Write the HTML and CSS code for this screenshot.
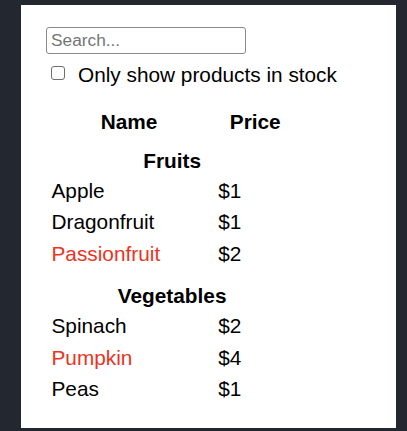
FILE: index.html
```html
<!DOCTYPE html>
<html>
<head>
<meta charset="utf-8">
<link rel="stylesheet" href="styles.css">
</head>
<body>
<div class="panel">
  <form class="search">
    <input class="search-input" type="text" placeholder="Search...">
    <label class="stock">
      <span class="box"></span>
      <span class="stock-text">Only show products in stock</span>
    </label>
  </form>
  <table class="products">
    <thead>
      <tr><th class="head">Name</th><th class="head">Price</th></tr>
    </thead>
    <tbody>
      <tr><th class="cat" colspan="2">Fruits</th></tr>
      <tr><td>Apple</td><td>$1</td></tr>
      <tr><td>Dragonfruit</td><td>$1</td></tr>
      <tr><td class="out">Passionfruit</td><td>$2</td></tr>
      <tr><th class="cat" colspan="2">Vegetables</th></tr>
      <tr><td>Spinach</td><td>$2</td></tr>
      <tr><td class="out">Pumpkin</td><td>$4</td></tr>
      <tr><td>Peas</td><td>$1</td></tr>
    </tbody>
  </table>
</div>
</body>
</html>
```

FILE: styles.css
```css
html, body {
  margin: 0;
  background: #23272f;
}
body {
  padding: 5px 0 0 21px;
  font-family: "Liberation Sans", Arial, sans-serif;
  color: #000;
}
.panel {
  box-sizing: border-box;
  width: 375px;
  height: 423px;
  background: #fff;
  padding: 22px 0 0 25px;
}
.search {
  margin: 0;
}
.search-input {
  display: block;
  box-sizing: border-box;
  width: 200px;
  height: 27px;
  margin: 0;
  padding: 0 4px;
  border: 1px solid #8a8a8a;
  border-radius: 3px;
  font-family: "Liberation Sans", Arial, sans-serif;
  font-size: 17.3px;
  color: #000;
  outline: none;
}
.search-input::placeholder {
  color: #757575;
}
.stock {
  display: flex;
  align-items: flex-start;
  margin-top: 8.8px;
  font-size: 20.8px;
  line-height: 24px;
  height: 24px;
}
.box {
  box-sizing: border-box;
  width: 14px;
  height: 14px;
  margin: 3.7px 0 0 5px;
  border: 1px solid #6e6e6e;
  border-radius: 3px;
  background: #fff;
}
.stock-text {
  margin-left: 13px;
}
.products {
  border-collapse: collapse;
  border-spacing: 0;
  margin-top: 10px;
  font-size: 20.8px;
  line-height: 24px;
}
.products th {
  font-weight: bold;
  text-align: center;
  padding: 0;
}
.products th.head {
  padding-top: 13px;
  padding-bottom: 0;
}
.products th.cat {
  padding-top: 15px;
  padding-bottom: 2.5px;
}
.products td {
  padding: 3.7px 52px 3.6px 5.5px;
}
.products td:last-child {
  padding-left: 6px;
  padding-right: 57px;
}
.out {
  color: #eb3323;
}
```
